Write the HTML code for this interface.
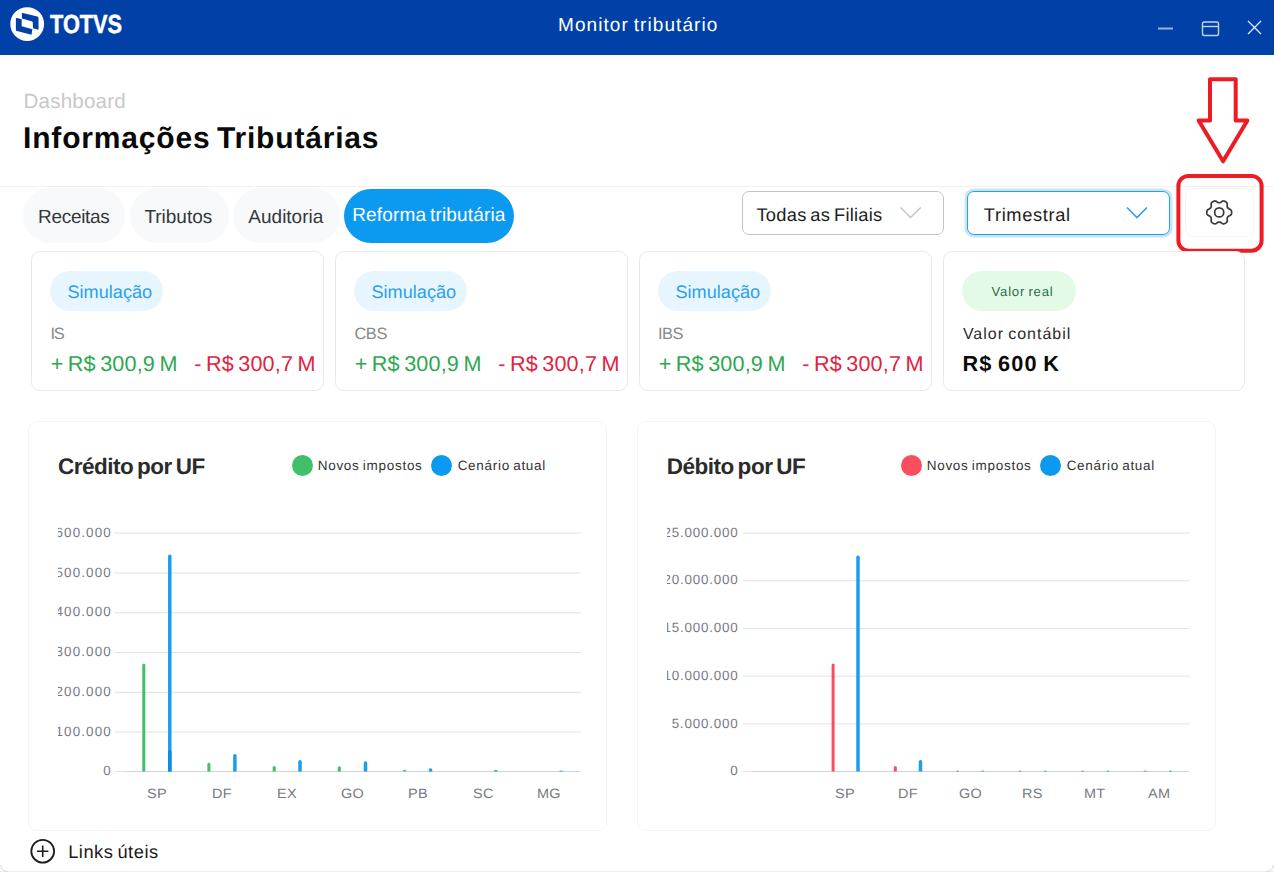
<!DOCTYPE html>
<html lang="pt-BR">
<head>
<meta charset="utf-8">
<title>Monitor tributário</title>
<style>
*{box-sizing:border-box;margin:0;padding:0}
html,body{width:1274px;height:872px;overflow:hidden;background:#fff}
body{position:relative;font-family:"Liberation Sans",sans-serif;color:#1d1d1d}
.t{position:absolute;white-space:nowrap;line-height:1;transform-origin:0 0;text-rendering:geometricPrecision}
.b{position:absolute}
#hdr{left:0;top:0;width:1274px;height:55px;background:#0141a7}
#sep{left:0;top:186px;width:1274px;height:1px;background:#f0f1f3}
.tab{top:188px;height:55px;border-radius:27.5px;background:#f8f9fa}
.tab.on{background:#0c9af0;top:189px;height:53.5px;border-radius:27px}
.sel{top:191px;height:44px;border:1px solid #c4c4c4;border-radius:7px;background:#fff}
.sel.focus{border-color:#2c9ef0;box-shadow:0 0 0 2.5px #c6e6fc}
.card{top:251px;height:139.5px;border:1px solid #e7e9ef;border-radius:9px;background:#fff}
.badge{top:271px;height:40px;border-radius:20px;background:#e7f6fe}
.badge.g{background:#e3fbe6}
.chart{top:421px;width:578.5px;height:409.5px;border:1px solid #f4f5f7;border-radius:9px;background:#fff;overflow:hidden}
.dot{top:454.8px;width:21px;height:21px;border-radius:50%}
svg{position:absolute;left:0;top:0;overflow:visible}
.ax .t{color:#787a83}
.clip{position:absolute;overflow:hidden}
</style>
</head>
<body>

<div class="b" id="hdr"></div>
<svg width="1274" height="55" viewBox="0 0 1274 55" fill="none">
  <circle cx="27.2" cy="24.05" r="16.9" fill="#fff"/>
  <path d="M21.9 12.8 L37.3 16.4 Q38.5 16.7 38.5 18 L38.6 29.7 L33 28.3 L32.8 22.6 Q32.8 21.5 31.6 21.2 L21.9 18.4 Z" fill="#0141a7"/>
  <path d="M15.9 17.8 L21.7 19.2 L21.7 26.2 L32.4 29.2 L31.5 34.8 L17 31.1 Q15.9 30.8 15.9 29.7 Z" fill="#0141a7"/>
  <path d="M1158 28.5 H1173" stroke="#9db3dc" stroke-width="2"/>
  <rect x="1202.5" y="22" width="16" height="13.5" rx="1.8" stroke="#c3d0ea" stroke-width="1.4"/>
  <path d="M1202.5 26.5 H1218.5" stroke="#c3d0ea" stroke-width="1.4"/>
  <path d="M1248 21 L1261 34 M1261 21 L1248 34" stroke="#e6ecf7" stroke-width="1.3"/>
</svg>
<div class="t" style="left:50.31px;top:9px;line-height:30px;font-size:26.00px;letter-spacing:0.000px;color:#fff;font-weight:bold;transform:scaleX(0.8358);-webkit-text-stroke:0.5px #fff;">TOTVS</div>
<div class="t" style="left:557.97px;top:15px;line-height:22px;font-size:19.00px;letter-spacing:1.089px;word-spacing:-1.62px;color:#fff;">Monitor tributário</div>
<div class="t" style="left:23.52px;top:90px;line-height:24px;font-size:20.60px;letter-spacing:0.175px;color:#c8c8c8;">Dashboard</div>
<div class="t" style="left:23.07px;top:122px;line-height:34px;font-size:30.00px;letter-spacing:0.813px;word-spacing:-2.55px;color:#0a0a0a;font-weight:bold;">Informações Tributárias</div>
<div class="b" id="sep"></div>
<div class="b tab" style="left:23px;width:102px"></div>
<div class="b tab" style="left:130px;width:99px"></div>
<div class="b tab" style="left:233px;width:107px"></div>
<div class="b tab on" style="left:344px;width:170px"></div>
<div class="t" style="left:38.11px;top:207px;line-height:22px;font-size:19.00px;letter-spacing:-0.333px;color:#33383d;">Receitas</div>
<div class="t" style="left:144.44px;top:207px;line-height:22px;font-size:19.00px;letter-spacing:-0.023px;color:#33383d;">Tributos</div>
<div class="t" style="left:248.35px;top:207px;line-height:22px;font-size:19.00px;letter-spacing:-0.006px;color:#33383d;">Auditoria</div>
<div class="t" style="left:352.18px;top:205px;line-height:22px;font-size:19.00px;letter-spacing:0.162px;word-spacing:-1.62px;color:#fff;">Reforma tributária</div>
<div class="b sel" style="left:742px;width:202px"></div>
<div class="b sel focus" style="left:967px;width:203px"></div>
<div class="t" style="left:756.46px;top:204px;line-height:21px;font-size:18.30px;letter-spacing:0.264px;word-spacing:-1.56px;color:#1d1d1d;">Todas as Filiais</div>
<div class="t" style="left:983.84px;top:204px;line-height:21px;font-size:18.30px;letter-spacing:0.628px;color:#1d1d1d;">Trimestral</div>
<div class="b" style="left:1185px;top:188px;width:69px;height:48.5px;border:1px solid #f5f5f6;border-radius:8px"></div>
<svg width="1274" height="260" viewBox="0 0 1274 260" fill="none">
  <path d="M900.5 207.5 L910.6 217.5 L920.7 207.5" stroke="#c4c4c4" stroke-width="1.4"/>
  <path d="M1127 207.5 L1137 217.5 L1147 207.5" stroke="#2c9ef0" stroke-width="1.6"/>
  <g stroke="#3a3a3a" stroke-width="1.7" stroke-linejoin="round" id="gear">
    <circle cx="1219.2" cy="212.4" r="4.55"/>
    <path d="M1231.65 212.40 L1231.63 211.86 L1231.55 211.32 L1231.41 210.79 L1231.17 210.29 L1230.79 209.83 L1230.24 209.44 L1229.58 209.13 L1228.95 208.85 L1228.45 208.57 L1228.08 208.26 L1227.79 207.93 L1227.56 207.58 L1227.37 207.20 L1227.22 206.78 L1227.14 206.30 L1227.15 205.73 L1227.23 205.05 L1227.28 204.32 L1227.22 203.65 L1227.02 203.09 L1226.70 202.63 L1226.31 202.24 L1225.88 201.91 L1225.42 201.62 L1224.94 201.37 L1224.44 201.16 L1223.91 201.02 L1223.36 200.97 L1222.77 201.08 L1222.16 201.36 L1221.56 201.77 L1221.00 202.18 L1220.51 202.47 L1220.05 202.64 L1219.62 202.73 L1219.20 202.75 L1218.78 202.73 L1218.35 202.64 L1217.89 202.47 L1217.40 202.18 L1216.84 201.77 L1216.24 201.36 L1215.63 201.08 L1215.04 200.97 L1214.49 201.02 L1213.96 201.16 L1213.46 201.37 L1212.98 201.62 L1212.52 201.91 L1212.09 202.24 L1211.70 202.63 L1211.38 203.09 L1211.18 203.65 L1211.12 204.32 L1211.17 205.05 L1211.25 205.73 L1211.26 206.30 L1211.18 206.78 L1211.03 207.20 L1210.84 207.57 L1210.61 207.93 L1210.32 208.26 L1209.95 208.57 L1209.45 208.85 L1208.82 209.13 L1208.16 209.44 L1207.61 209.83 L1207.23 210.29 L1206.99 210.79 L1206.85 211.32 L1206.77 211.86 L1206.75 212.40 L1206.77 212.94 L1206.85 213.48 L1206.99 214.01 L1207.23 214.51 L1207.61 214.97 L1208.16 215.36 L1208.82 215.67 L1209.45 215.95 L1209.95 216.23 L1210.32 216.54 L1210.61 216.87 L1210.84 217.22 L1211.03 217.60 L1211.18 218.02 L1211.26 218.50 L1211.25 219.07 L1211.17 219.75 L1211.12 220.48 L1211.18 221.15 L1211.38 221.71 L1211.70 222.17 L1212.09 222.56 L1212.52 222.89 L1212.98 223.18 L1213.46 223.43 L1213.96 223.64 L1214.49 223.78 L1215.04 223.83 L1215.63 223.72 L1216.24 223.44 L1216.84 223.03 L1217.40 222.62 L1217.89 222.33 L1218.35 222.16 L1218.78 222.07 L1219.20 222.05 L1219.62 222.07 L1220.05 222.16 L1220.51 222.33 L1221.00 222.62 L1221.56 223.03 L1222.16 223.44 L1222.77 223.72 L1223.36 223.83 L1223.91 223.78 L1224.44 223.64 L1224.94 223.43 L1225.42 223.18 L1225.88 222.89 L1226.31 222.56 L1226.70 222.17 L1227.02 221.71 L1227.22 221.15 L1227.28 220.48 L1227.23 219.75 L1227.15 219.07 L1227.14 218.50 L1227.22 218.02 L1227.37 217.60 L1227.56 217.22 L1227.79 216.87 L1228.08 216.54 L1228.45 216.23 L1228.95 215.95 L1229.58 215.67 L1230.24 215.36 L1230.79 214.97 L1231.17 214.51 L1231.41 214.01 L1231.55 213.48 L1231.63 212.94 Z"/>
  </g>
  <rect x="1178.4" y="176" width="83.2" height="74.7" rx="10" stroke="#ed1c24" stroke-width="4"/>
  <path d="M1210 79.3 H1235.7 V120.5 H1247.4 L1223.1 161.3 L1198.6 120.5 H1210 Z" stroke="#ed1c24" stroke-width="4" stroke-linejoin="round"/>
</svg>
<div class="b card" style="left:30.5px;width:293.5px"></div>
<div class="b badge" style="left:50px;width:113px"></div>
<div class="t" style="left:67.53px;top:282px;line-height:20px;font-size:18.10px;letter-spacing:0.009px;color:#2c9ef0;">Simulação</div>
<div class="t" style="left:50.54px;top:325px;line-height:19px;font-size:16.40px;letter-spacing:-1.257px;color:#8a8a8a;">IS</div>
<div class="t" style="left:50.74px;top:351px;line-height:25px;font-size:21.60px;letter-spacing:0.175px;word-spacing:-1.84px;color:#2ca84f;">+ R$ 300,9 M</div>
<div class="t" style="left:194.18px;top:351px;line-height:25px;font-size:21.60px;letter-spacing:0.181px;word-spacing:-1.84px;color:#e0243f;">- R$ 300,7 M</div>
<div class="b card" style="left:334.5px;width:293.5px"></div>
<div class="b badge" style="left:354px;width:113px"></div>
<div class="t" style="left:371.53px;top:282px;line-height:20px;font-size:18.10px;letter-spacing:0.009px;color:#2c9ef0;">Simulação</div>
<div class="t" style="left:354.38px;top:325px;line-height:19px;font-size:16.40px;letter-spacing:-0.381px;color:#8a8a8a;">CBS</div>
<div class="t" style="left:354.74px;top:351px;line-height:25px;font-size:21.60px;letter-spacing:0.175px;word-spacing:-1.84px;color:#2ca84f;">+ R$ 300,9 M</div>
<div class="t" style="left:498.18px;top:351px;line-height:25px;font-size:21.60px;letter-spacing:0.181px;word-spacing:-1.84px;color:#e0243f;">- R$ 300,7 M</div>
<div class="b card" style="left:638.5px;width:293.5px"></div>
<div class="b badge" style="left:658px;width:113px"></div>
<div class="t" style="left:675.53px;top:282px;line-height:20px;font-size:18.10px;letter-spacing:0.009px;color:#2c9ef0;">Simulação</div>
<div class="t" style="left:657.93px;top:325px;line-height:19px;font-size:16.40px;letter-spacing:-0.414px;color:#8a8a8a;">IBS</div>
<div class="t" style="left:658.74px;top:351px;line-height:25px;font-size:21.60px;letter-spacing:0.175px;word-spacing:-1.84px;color:#2ca84f;">+ R$ 300,9 M</div>
<div class="t" style="left:802.18px;top:351px;line-height:25px;font-size:21.60px;letter-spacing:0.181px;word-spacing:-1.84px;color:#e0243f;">- R$ 300,7 M</div>
<div class="b card" style="left:942.5px;width:302.5px"></div>
<div class="b badge g" style="left:961.8px;width:113.8px"></div>
<div class="t" style="left:991.52px;top:284px;line-height:15px;font-size:13.10px;letter-spacing:0.796px;word-spacing:-1.11px;color:#2a6e4a;">Valor real</div>
<div class="t" style="left:962.88px;top:326px;line-height:18px;font-size:16.00px;letter-spacing:1.009px;word-spacing:-1.36px;color:#2b2b2b;">Valor contábil</div>
<div class="t" style="left:962.43px;top:351px;line-height:25px;font-size:21.70px;letter-spacing:1.219px;word-spacing:-1.84px;color:#0a0a0a;font-weight:bold;">R$ 600 K</div>
<div class="b chart" style="left:28px"></div>
<div class="t" style="left:57.97px;top:454px;line-height:25px;font-size:22.50px;letter-spacing:-0.496px;word-spacing:-1.91px;color:#2b2b2b;font-weight:bold;">Crédito por UF</div>
<div class="b dot" style="left:292px;background:#40c068"></div>
<div class="b dot" style="left:431px;background:#0c9af0"></div>
<div class="t" style="left:317.71px;top:458px;line-height:15px;font-size:13.50px;letter-spacing:0.713px;word-spacing:-1.15px;color:#333;">Novos impostos</div>
<div class="t" style="left:457.67px;top:458px;line-height:15px;font-size:13.50px;letter-spacing:0.704px;word-spacing:-1.15px;color:#333;">Cenário atual</div>
<svg width="1274" height="872" viewBox="0 0 1274 872" fill="none">
<path d="M114.5 533.1 H581" stroke="#e2e2e4" stroke-width="1"/>
<path d="M114.5 573.0 H581" stroke="#e2e2e4" stroke-width="1"/>
<path d="M114.5 612.8 H581" stroke="#e2e2e4" stroke-width="1"/>
<path d="M114.5 652.6 H581" stroke="#e2e2e4" stroke-width="1"/>
<path d="M114.5 692.3 H581" stroke="#e2e2e4" stroke-width="1"/>
<path d="M114.5 732.0 H581" stroke="#e2e2e4" stroke-width="1"/>
<path d="M114.5 771.5 H124.2" stroke="#e2e2e4" stroke-width="1"/>
<path d="M124.2 771.5 H581" stroke="#d2d3d6" stroke-width="1"/>
<path d="M142.30 771.5 V665.10 Q142.30 663.60 143.80 663.60 Q145.30 663.60 145.30 665.10 V771.5 Z" fill="#40c068"/>
<path d="M168.05 771.5 V556.15 Q168.05 554.40 169.80 554.40 Q171.55 554.40 171.55 556.15 V771.5 Z" fill="#1a9eed"/>
<path d="M168.00 771.5 V751.80 Q168.00 750.00 169.80 750.00 Q171.60 750.00 171.60 751.80 V771.5 Z" fill="#0b8ee8"/>
<path d="M207.40 771.5 V764.30 Q207.40 762.80 208.90 762.80 Q210.40 762.80 210.40 764.30 V771.5 Z" fill="#40c068"/>
<path d="M233.15 771.5 V755.75 Q233.15 754.00 234.90 754.00 Q236.65 754.00 236.65 755.75 V771.5 Z" fill="#1a9eed"/>
<path d="M272.70 771.5 V767.50 Q272.70 766.00 274.20 766.00 Q275.70 766.00 275.70 767.50 V771.5 Z" fill="#40c068"/>
<path d="M298.25 771.5 V761.75 Q298.25 760.00 300.00 760.00 Q301.75 760.00 301.75 761.75 V771.5 Z" fill="#1a9eed"/>
<path d="M337.80 771.5 V767.80 Q337.80 766.30 339.30 766.30 Q340.80 766.30 340.80 767.80 V771.5 Z" fill="#40c068"/>
<path d="M363.75 771.5 V762.95 Q363.75 761.20 365.50 761.20 Q367.25 761.20 367.25 762.95 V771.5 Z" fill="#1a9eed"/>
<path d="M403.10 771.5 V770.65 Q403.10 769.80 404.60 769.80 Q406.10 769.80 406.10 770.65 V771.5 Z" fill="#40c068"/>
<path d="M428.75 771.5 V769.90 Q428.75 768.30 430.50 768.30 Q432.25 768.30 432.25 769.90 V771.5 Z" fill="#1a9eed"/>
<path d="M494.05 771.5 V770.75 Q494.05 770.00 495.80 770.00 Q497.55 770.00 497.55 770.75 V771.5 Z" fill="#1a9eed"/>
<path d="M559.35 771.5 V770.95 Q559.35 770.40 561.10 770.40 Q562.85 770.40 562.85 770.95 V771.5 Z" fill="#1a9eed"/>
</svg>
<div class="clip ax" style="left:58px;top:500px;width:56.3px;height:300px">
<div class="t" style="left:-2.57px;top:25.76px;font-size:13.4px;letter-spacing:1.15px">600.000</div>
<div class="t" style="left:-2.57px;top:65.66px;font-size:13.4px;letter-spacing:1.15px">500.000</div>
<div class="t" style="left:-2.57px;top:105.46px;font-size:13.4px;letter-spacing:1.15px">400.000</div>
<div class="t" style="left:-2.57px;top:145.26px;font-size:13.4px;letter-spacing:1.15px">300.000</div>
<div class="t" style="left:-2.57px;top:184.96px;font-size:13.4px;letter-spacing:1.15px">200.000</div>
<div class="t" style="left:-2.57px;top:224.66px;font-size:13.4px;letter-spacing:1.15px">100.000</div>
<div class="t" style="left:45.33px;top:264.16px;font-size:13.4px;letter-spacing:1.15px">0</div>
</div>
<div class="ax">
<div class="t" style="left:147.10px;top:786px;line-height:15px;font-size:13.5px;letter-spacing:0.3px;transform:scaleX(1.07)">SP</div>
<div class="t" style="left:211.99px;top:786px;line-height:15px;font-size:13.5px;letter-spacing:0.3px;transform:scaleX(1.07)">DF</div>
<div class="t" style="left:277.11px;top:786px;line-height:15px;font-size:13.5px;letter-spacing:0.3px;transform:scaleX(1.07)">EX</div>
<div class="t" style="left:341.17px;top:786px;line-height:15px;font-size:13.5px;letter-spacing:0.3px;transform:scaleX(1.07)">GO</div>
<div class="t" style="left:407.87px;top:786px;line-height:15px;font-size:13.5px;letter-spacing:0.3px;transform:scaleX(1.07)">PB</div>
<div class="t" style="left:472.88px;top:786px;line-height:15px;font-size:13.5px;letter-spacing:0.3px;transform:scaleX(1.07)">SC</div>
<div class="t" style="left:536.51px;top:786px;line-height:15px;font-size:13.5px;letter-spacing:0.3px;transform:scaleX(1.07)">MG</div>
</div>
<div class="b chart" style="left:637px"></div>
<div class="t" style="left:666.73px;top:454px;line-height:25px;font-size:22.50px;letter-spacing:-0.490px;word-spacing:-1.91px;color:#2b2b2b;font-weight:bold;">Débito por UF</div>
<div class="b dot" style="left:901px;background:#fa4d5e"></div>
<div class="b dot" style="left:1040px;background:#0c9af0"></div>
<div class="t" style="left:926.71px;top:458px;line-height:15px;font-size:13.50px;letter-spacing:0.713px;word-spacing:-1.15px;color:#333;">Novos impostos</div>
<div class="t" style="left:1066.67px;top:458px;line-height:15px;font-size:13.50px;letter-spacing:0.704px;word-spacing:-1.15px;color:#333;">Cenário atual</div>
<svg width="1274" height="872" viewBox="0 0 1274 872" fill="none">
<path d="M743 533.1 H1189.3" stroke="#e2e2e4" stroke-width="1"/>
<path d="M743 580.8 H1189.3" stroke="#e2e2e4" stroke-width="1"/>
<path d="M743 628.5 H1189.3" stroke="#e2e2e4" stroke-width="1"/>
<path d="M743 676.2 H1189.3" stroke="#e2e2e4" stroke-width="1"/>
<path d="M743 723.9 H1189.3" stroke="#e2e2e4" stroke-width="1"/>
<path d="M743 771.5 H751.3" stroke="#e2e2e4" stroke-width="1"/>
<path d="M751.3 771.5 H1189.3" stroke="#d2d3d6" stroke-width="1"/>
<path d="M831.60 771.5 V665.10 Q831.60 663.60 833.10 663.60 Q834.60 663.60 834.60 665.10 V771.5 Z" fill="#fa4d5e"/>
<path d="M856.25 771.5 V557.25 Q856.25 555.50 858.00 555.50 Q859.75 555.50 859.75 557.25 V771.5 Z" fill="#1a9eed"/>
<path d="M893.80 771.5 V767.50 Q893.80 766.00 895.30 766.00 Q896.80 766.00 896.80 767.50 V771.5 Z" fill="#fa4d5e"/>
<path d="M918.75 771.5 V761.75 Q918.75 760.00 920.50 760.00 Q922.25 760.00 922.25 761.75 V771.5 Z" fill="#1a9eed"/>
<path d="M956.10 771.5 V771.05 Q956.10 770.60 957.60 770.60 Q959.10 770.60 959.10 771.05 V771.5 Z" fill="#fa4d5e"/>
<path d="M981.30 771.5 V771.05 Q981.30 770.60 982.80 770.60 Q984.30 770.60 984.30 771.05 V771.5 Z" fill="#1a9eed"/>
<path d="M1018.60 771.5 V771.05 Q1018.60 770.60 1020.10 770.60 Q1021.60 770.60 1021.60 771.05 V771.5 Z" fill="#fa4d5e"/>
<path d="M1043.80 771.5 V771.05 Q1043.80 770.60 1045.30 770.60 Q1046.80 770.60 1046.80 771.05 V771.5 Z" fill="#1a9eed"/>
<path d="M1081.10 771.5 V771.05 Q1081.10 770.60 1082.60 770.60 Q1084.10 770.60 1084.10 771.05 V771.5 Z" fill="#fa4d5e"/>
<path d="M1106.30 771.5 V771.05 Q1106.30 770.60 1107.80 770.60 Q1109.30 770.60 1109.30 771.05 V771.5 Z" fill="#1a9eed"/>
<path d="M1143.60 771.5 V771.05 Q1143.60 770.60 1145.10 770.60 Q1146.60 770.60 1146.60 771.05 V771.5 Z" fill="#fa4d5e"/>
<path d="M1168.80 771.5 V771.05 Q1168.80 770.60 1170.30 770.60 Q1171.80 770.60 1171.80 771.05 V771.5 Z" fill="#1a9eed"/>
</svg>
<div class="clip ax" style="left:667px;top:500px;width:74.20000000000005px;height:300px">
<div class="t" style="left:-3.60px;top:25.76px;font-size:13.4px;letter-spacing:0.8px">25.000.000</div>
<div class="t" style="left:-3.60px;top:73.46px;font-size:13.4px;letter-spacing:0.8px">20.000.000</div>
<div class="t" style="left:-3.60px;top:121.16px;font-size:13.4px;letter-spacing:0.8px">15.000.000</div>
<div class="t" style="left:-3.60px;top:168.86px;font-size:13.4px;letter-spacing:0.8px">10.000.000</div>
<div class="t" style="left:4.64px;top:216.56px;font-size:13.4px;letter-spacing:0.8px">5.000.000</div>
<div class="t" style="left:63.23px;top:264.16px;font-size:13.4px;letter-spacing:0.8px">0</div>
</div>
<div class="ax">
<div class="t" style="left:835.43px;top:786px;line-height:15px;font-size:13.5px;letter-spacing:0.3px;transform:scaleX(1.07)">SP</div>
<div class="t" style="left:897.64px;top:786px;line-height:15px;font-size:13.5px;letter-spacing:0.3px;transform:scaleX(1.07)">DF</div>
<div class="t" style="left:958.87px;top:786px;line-height:15px;font-size:13.5px;letter-spacing:0.3px;transform:scaleX(1.07)">GO</div>
<div class="t" style="left:1022.42px;top:786px;line-height:15px;font-size:13.5px;letter-spacing:0.3px;transform:scaleX(1.07)">RS</div>
<div class="t" style="left:1084.41px;top:786px;line-height:15px;font-size:13.5px;letter-spacing:0.3px;transform:scaleX(1.07)">MT</div>
<div class="t" style="left:1147.60px;top:786px;line-height:15px;font-size:13.5px;letter-spacing:0.3px;transform:scaleX(1.07)">AM</div>
</div>
<svg width="1274" height="872" viewBox="0 0 1274 872" fill="none">
  <circle cx="42.7" cy="851.2" r="11.4" stroke="#1d1d1d" stroke-width="1.8"/>
  <path d="M37 851.2 H48.4 M42.7 845.5 V856.9" stroke="#1d1d1d" stroke-width="1.6"/>
  <path d="M0 871.5 H1274" stroke="#ededed" stroke-width="1"/>
  <path d="M0.5 865 Q1 871 8 871.5" stroke="#d6d6d6" stroke-width="1"/>
  <path d="M1273.5 865 Q1273 871 1266 871.5" stroke="#d6d6d6" stroke-width="1"/>
</svg>
<div class="t" style="left:68.17px;top:841px;line-height:21px;font-size:18.30px;letter-spacing:0.515px;word-spacing:-1.56px;color:#1a1a1a;">Links úteis</div>
</body>
</html>
